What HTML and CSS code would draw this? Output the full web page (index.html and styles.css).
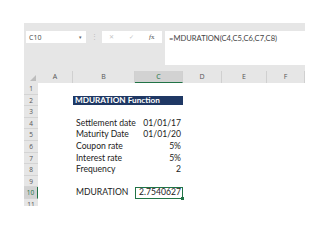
FILE: index.html
```html
<!DOCTYPE html>
<html lang="en">
<head>
    <meta charset="UTF-8">
    <title>MDURATION Function</title>
    <link rel="stylesheet" href="styles.css">
</head>
<body>
    <div class="sheet">
        <div class="toolbar">
            <div class="name-box">
                <span>C10</span>
                <span class="caret">&#9662;</span>
            </div>
            <span class="grip">&#8942;</span>
            <div class="fx-box">
                <span class="fx-icon">&#10005;</span>
                <span class="fx-icon">&#10003;</span>
                <span class="fx-icon fx"><i>f</i>x</span>
            </div>
            <div class="formula">=MDURATION(C4,C5,C6,C7,C8)</div>
        </div>

        <div class="grid">
            <div class="corner"><span class="tri"></span></div>
            <div class="col-head">A</div>
            <div class="col-head">B</div>
            <div class="col-head active">C</div>
            <div class="col-head">D</div>
            <div class="col-head">E</div>
            <div class="col-head">F</div>

            <div class="row-head">1</div>
            <div class="cell"></div><div class="cell"></div><div class="cell"></div><div class="cell"></div><div class="cell"></div><div class="cell"></div>

            <div class="row-head">2</div>
            <div class="cell"></div>
            <div class="cell title">MDURATION Function</div>
            <div class="cell"></div><div class="cell"></div><div class="cell"></div>

            <div class="row-head">3</div>
            <div class="cell"></div><div class="cell"></div><div class="cell"></div><div class="cell"></div><div class="cell"></div><div class="cell"></div>

            <div class="row-head">4</div>
            <div class="cell"></div>
            <div class="cell label">Settlement date</div>
            <div class="cell num">01/01/17</div>
            <div class="cell"></div><div class="cell"></div><div class="cell"></div>

            <div class="row-head">5</div>
            <div class="cell"></div>
            <div class="cell label">Maturity Date</div>
            <div class="cell num">01/01/20</div>
            <div class="cell"></div><div class="cell"></div><div class="cell"></div>

            <div class="row-head">6</div>
            <div class="cell"></div>
            <div class="cell label">Coupon rate</div>
            <div class="cell num">5%</div>
            <div class="cell"></div><div class="cell"></div><div class="cell"></div>

            <div class="row-head">7</div>
            <div class="cell"></div>
            <div class="cell label">Interest rate</div>
            <div class="cell num">5%</div>
            <div class="cell"></div><div class="cell"></div><div class="cell"></div>

            <div class="row-head">8</div>
            <div class="cell"></div>
            <div class="cell label">Frequency</div>
            <div class="cell num">2</div>
            <div class="cell"></div><div class="cell"></div><div class="cell"></div>

            <div class="row-head">9</div>
            <div class="cell"></div><div class="cell"></div><div class="cell"></div><div class="cell"></div><div class="cell"></div><div class="cell"></div>

            <div class="row-head active">10</div>
            <div class="cell"></div>
            <div class="cell label">MDURATION</div>
            <div class="cell num selected">2.7540627</div>
            <div class="cell"></div><div class="cell"></div><div class="cell"></div>

            <div class="row-head">11</div>
            <div class="cell"></div><div class="cell"></div><div class="cell"></div><div class="cell"></div><div class="cell"></div><div class="cell"></div>
        </div>
    </div>
</body>
</html>
```

FILE: styles.css
```css
body {
    margin: 0;
    background: #ffffff;
    font-family: 'Open Sans', 'Liberation Sans', sans-serif;
}

.sheet {
    margin: 23px 0 0 24px;
    width: 281px;
    height: 183px;
    overflow: hidden;
    background: #e6e6e6;
}

/* formula bar */
.toolbar {
    display: flex;
    align-items: flex-start;
    height: 48px;
    padding-top: 8px;
    box-sizing: border-box;
}
.name-box {
    display: flex;
    justify-content: space-between;
    align-items: center;
    width: 60px;
    height: 12px;
    margin-left: 2px;
    padding: 0 4px 0 3px;
    box-sizing: border-box;
    background: #fff;
    font-size: 7px;
    color: #444;
}
.name-box .caret {
    font-size: 5px;
    color: #666;
}
.grip {
    width: 16px;
    text-align: center;
    font-size: 7px;
    line-height: 12px;
    color: #bbb;
}
.fx-box {
    display: flex;
    justify-content: space-around;
    align-items: center;
    width: 60px;
    height: 12px;
    background: #fff;
}
.fx-icon {
    font-size: 6px;
    color: #c4c4c4;
}
.fx-icon.fx {
    color: #555;
    font-family: 'Liberation Serif', serif;
    font-size: 7px;
}
.formula {
    flex: 1;
    height: 34px;
    margin-left: 3px;
    padding: 2px 4px;
    box-sizing: border-box;
    background: #fff;
    font-family: Lato, 'Open Sans', sans-serif;
    font-size: 7.6px;
    color: #444;
}

/* spreadsheet */
.grid {
    display: grid;
    grid-template-columns: 14px 35px 62px 48px 39px 45px 38px;
    grid-template-rows: 12px repeat(11, 11.6px);
    background: #fff;
}
.corner {
    position: relative;
    background: #e6e6e6;
}
.corner .tri {
    position: absolute;
    right: 2px;
    bottom: 2px;
    border-left: 6px solid transparent;
    border-bottom: 6px solid #bdbdbd;
}
.col-head {
    background: #e6e6e6;
    border-right: 1px solid #d0d0d0;
    text-align: center;
    font-size: 7px;
    line-height: 12px;
    color: #555;
}
.col-head.active {
    background: #d2d2d2;
    border-bottom: 1px solid #217346;
    color: #217346;
}
.row-head {
    background: #e6e6e6;
    border-bottom: 1px solid #d4d4d4;
    text-align: center;
    font-size: 6.5px;
    line-height: 11px;
    color: #555;
}
.row-head.active {
    background: #d2d2d2;
    border-right: 1px solid #217346;
    color: #217346;
}
.cell {
    font-family: Lato, 'Open Sans', sans-serif;
    font-size: 8.6px;
    line-height: 11.6px;
    color: #222;
    white-space: nowrap;
}
.label {
    padding-left: 3px;
}
.num {
    text-align: right;
    padding-right: 2px;
}
.title {
    grid-column: span 2;
    margin: 1px 0;
    padding-left: 2px;
    background: #1f3864;
    color: #fff;
    font-weight: bold;
    font-size: 8.2px;
    line-height: 9.6px;
}
.selected {
    position: relative;
    border: 1px solid #217346;
    line-height: 9.6px;
    padding-right: 1px;
}
.selected::after {
    content: '';
    position: absolute;
    right: -2px;
    bottom: -2px;
    width: 3px;
    height: 3px;
    background: #217346;
}
```
